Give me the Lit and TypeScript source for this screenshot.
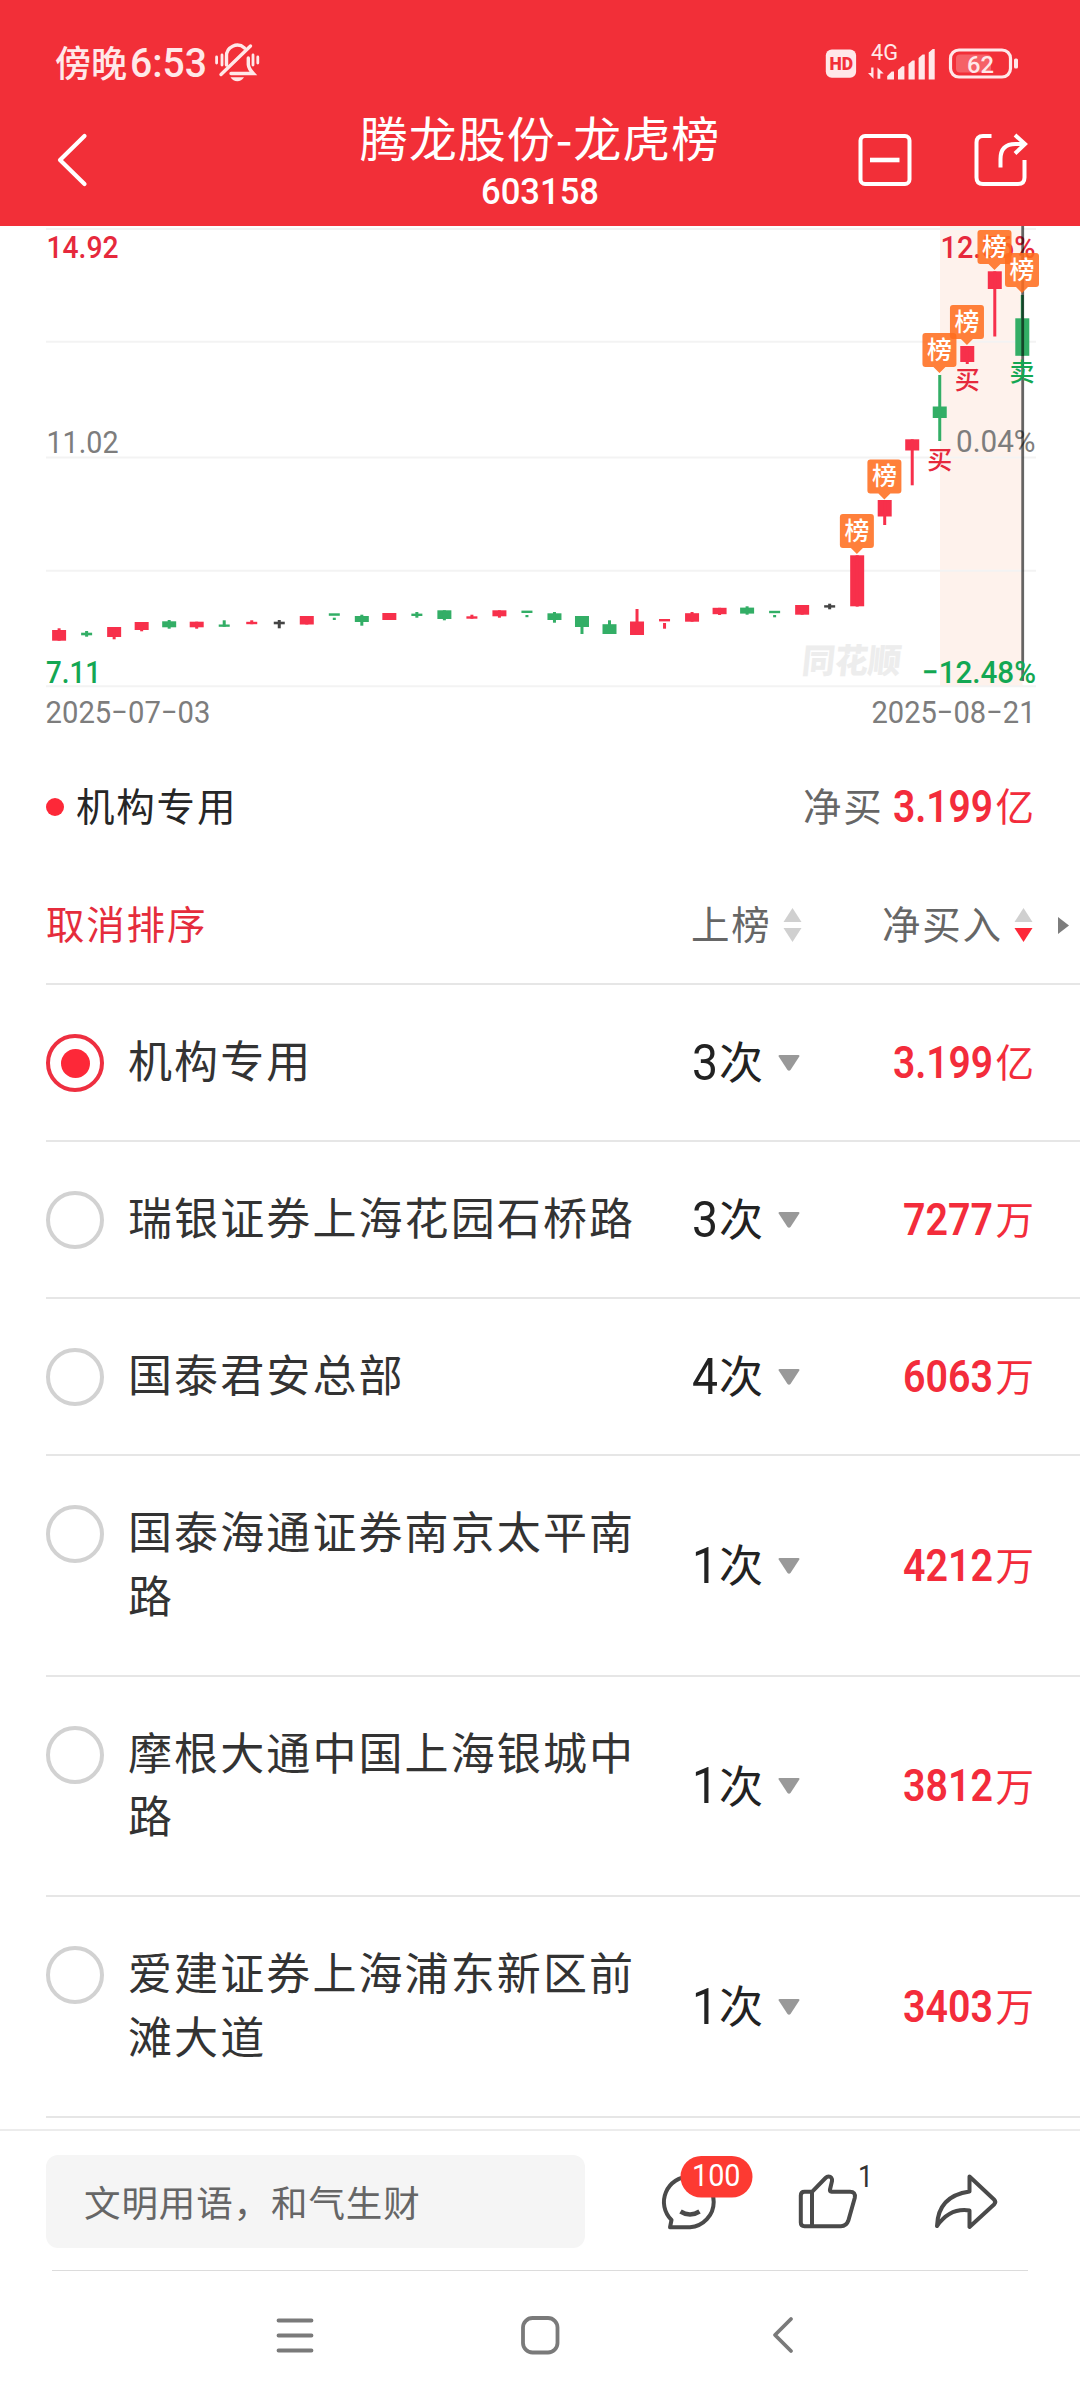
import { LitElement, html, svg, css } from "lit";
import { customElement } from "lit/decorators.js";
import { classMap } from "lit/directives/class-map.js";

type Tone = "up" | "down" | "flat";

/** One candle: body top/bottom, wick top/bottom, tone, and whether the body is a thin dash. */
type Candle = [number, number, number, number, Tone, boolean?];

interface Seat {
  name: string;
  count: string;
  amount: string;
  amountWidth: number;
  unit: string;
  checked?: boolean;
}

const CANDLES: Candle[] = [
  [630, 640.7, 628.3, 640.7, "up"],
  [632.7, 635.3, 631, 636.7, "down", true],
  [627, 637, 627, 639.3, "up"],
  [622, 630, 622, 631.3, "up"],
  [621.3, 627.3, 620, 628.7, "down"],
  [621.7, 627.3, 621.7, 628.7, "up"],
  [624.5, 626.8, 620.3, 626.8, "down", true],
  [621.8, 624.2, 620.3, 624.2, "up", true],
  [621.7, 624.3, 620, 628.3, "flat", true],
  [616, 624.5, 616, 624.5, "up"],
  [613.3, 615.8, 617.7, 620, "down", true],
  [616, 622, 614.7, 625.7, "down"],
  [613, 620, 613, 620, "up"],
  [613.6, 616, 612, 617.7, "down", true],
  [610.3, 619, 610.3, 620.3, "down"],
  [616.3, 618.7, 614.7, 618.7, "up", true],
  [610.3, 616.3, 610.3, 617.7, "up"],
  [610.6, 613, 615, 617.2, "down", true],
  [613.3, 620, 612, 622.7, "down"],
  [616, 627, 616, 634, "down"],
  [624.2, 634, 620.3, 634, "down"],
  [621.5, 635, 609, 635, "up"],
  [619, 621.4, 623, 628.7, "up", true],
  [613.2, 621.7, 612, 621.7, "up"],
  [607.8, 614.2, 607.8, 615, "up"],
  [607.6, 613.6, 606.3, 614.7, "down"],
  [610.8, 613.2, 615, 617.3, "down", true],
  [605, 614.7, 605, 614.7, "up"],
  [605.2, 607.6, 603.7, 609.3, "flat", true],
  [555.3, 606.3, 555.3, 606.6, "up"],
  [500, 516.5, 500, 525, "up"],
  [439.3, 450.5, 439.3, 485.3, "up"],
  [406.5, 418, 375, 441, "down"],
  [346, 362, 346, 364, "up"],
  [271.3, 289, 271.3, 336.5, "up"],
  [318.3, 355.8, 295, 355.8, "down"],
];

/** Candle index and the y of the marker's tip. */
const MARKERS: [number, number][] = [
  [29, 554],
  [30, 499.5],
  [32, 373],
  [33, 345],
  [34, 270],
  [35, 293],
];

const GRID = [229, 341.7, 457.5, 570.7, 686.3];

const SEATS: Seat[] = [
  { name: "机构专用", count: "3", amount: "3.199", amountWidth: 100, unit: "亿", checked: true },
  { name: "瑞银证券上海花园石桥路", count: "3", amount: "7277", amountWidth: 90, unit: "万" },
  { name: "国泰君安总部", count: "4", amount: "6063", amountWidth: 90, unit: "万" },
  { name: "国泰海通证券南京太平南路", count: "1", amount: "4212", amountWidth: 90, unit: "万" },
  { name: "摩根大通中国上海银城中路", count: "1", amount: "3812", amountWidth: 90, unit: "万" },
  { name: "爱建证券上海浦东新区前滩大道", count: "1", amount: "3403", amountWidth: 90, unit: "万" },
];

const candleX = (i: number) => 59.1 + i * 27.52;

/** Condensed figures: real text fitted to a width, sitting on the text baseline. */
const figures = (text: string, width: number, cap: number, cls = "") =>
  html`<svg class="fig ${cls}" width=${width} height=${cap}><text x="0" y=${cap} font-size=${cap / 0.711} textLength=${width} lengthAdjust="spacingAndGlyphs">${text}</text></svg>`;

@customElement("app-root")
export class AppRoot extends LitElement {
  static styles = css`
    :host {
      display: flex;
      flex-direction: column;
      width: 1080px;
      height: 2400px;
      overflow: hidden;
      background: #fff;
      color: #333;
      font-family: "Noto Sans CJK SC", "Noto Sans", sans-serif;
    }
    svg {
      display: block;
      flex: none;
      overflow: visible;
    }
    .fig {
      display: inline-block;
      font-family: Roboto, "Liberation Sans", sans-serif;
      fill: currentColor;
    }
    .strong {
      font-weight: 600;
    }
    .medium {
      font-weight: 500;
    }
    header {
      height: 226px;
      flex: none;
      background: #f22f38;
      color: #fff;
    }
    .status {
      box-sizing: border-box;
      height: 94px;
      padding: 32px 60px 0 55px;
      display: flex;
      align-items: center;
      justify-content: space-between;
      color: #ffe8e9;
      fill: #ffe8e9;
    }
    .clock {
      display: flex;
      align-items: center;
      gap: 8px;
      font-size: 36px;
      font-weight: 500;
      line-height: 48px;
      white-space: nowrap;
    }
    .clock div {
      margin-top: -5px;
    }
    .clock .fig {
      margin-left: 3px;
    }
    .title-row {
      height: 132px;
      display: grid;
      grid-template-columns: 250px 1fr 250px;
      align-items: center;
    }
    .title-row .back {
      padding-left: 55px;
    }
    .title {
      text-align: center;
      height: 100px;
    }
    .title h1 {
      margin: -1px 0 0;
      font-size: 48px;
      font-weight: 400;
      letter-spacing: 1px;
      line-height: 54px;
      white-space: nowrap;
    }
    .title .code {
      display: flex;
      justify-content: center;
      margin-top: 14px;
    }
    .tools {
      display: flex;
      gap: 60px;
      padding-left: 27px;
    }
    .chart {
      height: 510px;
      flex: none;
    }
    .chart text {
      font-family: Roboto, sans-serif;
      font-size: 31.4px;
    }
    .chart .han {
      font-family: "Noto Sans CJK SC", sans-serif;
      font-size: 25px;
      font-weight: 500;
    }
    .chart .mark {
      font-family: "Noto Sans CJK SC", sans-serif;
      font-size: 34px;
      font-weight: 900;
      fill: #ededed;
    }
    .grid {
      fill: #f3f3f3;
    }
    .up {
      fill: #f7304b;
    }
    .down {
      fill: #33ae66;
    }
    .flat {
      fill: #444;
    }
    .t-up {
      fill: #e6293c;
    }
    .t-down {
      fill: #13a753;
    }
    .t-mute {
      fill: #7d7d7d;
    }
    .legend,
    .sort {
      box-sizing: border-box;
      flex: none;
      display: flex;
      align-items: center;
      font-size: 38.5px;
      letter-spacing: 1.8px;
      white-space: nowrap;
    }
    .legend {
      height: 139px;
      padding: 0 46px 3px;
    }
    .dot {
      width: 18px;
      height: 18px;
      border-radius: 50%;
      background: #fd2838;
      margin: 5px 12px 0 0;
    }
    .legend .label {
      flex: 1;
      color: #262626;
    }
    .legend .muted {
      margin-right: 10px;
    }
    .muted {
      color: #666;
    }
    .amount {
      color: #f32c3b;
      letter-spacing: 0;
      font-size: 38.5px;
      white-space: nowrap;
      text-align: right;
    }
    .amount .fig {
      margin-right: 2px;
    }
    .sort {
      height: 108px;
      padding: 0 11px 14px 46px;
      color: #666;
    }
    .sort .cancel {
      color: #e52c3c;
      width: 645px;
    }
    .sort .by-count {
      width: 191px;
    }
    .sort .by-net {
      width: 176px;
    }
    .sort .col {
      display: flex;
      align-items: center;
    }
    .sort svg {
      margin-top: 6px;
    }
    .sort .col svg {
      margin-left: 11px;
    }
    .list {
      flex: none;
      margin-left: 46px;
      border-top: 2px solid #e6e6e6;
    }
    .row {
      display: grid;
      grid-template-columns: 82px 563px 170px 1fr;
      padding: 46px 46px 45.5px 0;
      border-bottom: 2px solid #e6e6e6;
      align-items: center;
    }
    .radio {
      box-sizing: border-box;
      width: 58px;
      height: 58px;
      border: 4px solid #d2d2d2;
      border-radius: 50%;
      align-self: start;
      margin-top: 3px;
      display: grid;
      place-items: center;
    }
    .radio.on {
      border-color: #ee2f40;
    }
    .radio.on::after {
      content: "";
      width: 29px;
      height: 29px;
      border-radius: 50%;
      background: #fd2838;
    }
    .name {
      width: 512px;
      font-size: 44px;
      letter-spacing: 2.1px;
      line-height: 63.5px;
      margin-top: -3px;
      margin-bottom: 3px;
      word-break: break-all;
    }
    .count {
      display: flex;
      align-items: center;
      color: #222;
      font-size: 44px;
      line-height: 60px;
      padding-left: 1px;
    }
    .count .fig {
      margin-right: 1px;
    }
    .count svg.tri {
      margin-left: 15px;
    }
    .count span {
      margin-top: -5px;
      white-space: nowrap;
    }
    .row .amount {
      line-height: 60px;
      margin-top: -5px;
    }
    .bar {
      margin-top: auto;
      height: 141px;
      flex: none;
      box-sizing: border-box;
      border-top: 2px solid #ececec;
      background: #fff;
      padding: 24px 46px 0;
      display: flex;
      align-items: flex-start;
    }
    .input {
      width: 539px;
      height: 93px;
      box-sizing: border-box;
      padding-left: 38px;
      border-radius: 12px;
      background: #f5f5f5;
      color: #666;
      font-size: 36.5px;
      letter-spacing: 0.9px;
      line-height: 93px;
      white-space: nowrap;
    }
    .nav {
      flex: none;
      height: 130px;
      box-sizing: border-box;
      margin: 0 52px;
      border-top: 1px solid #dcdcdc;
      padding: 45px 235px 0 224px;
      display: flex;
      justify-content: space-between;
      align-items: flex-start;
    }
    .nav .home {
      margin-right: 8px;
    }
    .actions {
      fill: none;
      stroke: #4a4a4a;
      stroke-width: 4;
      stroke-linejoin: round;
      stroke-linecap: round;
    }
    .actions text {
      font-family: Roboto, sans-serif;
      stroke: none;
    }
    .line {
      fill: none;
      stroke: #7a7a7a;
      stroke-width: 3.8;
      stroke-linecap: round;
      stroke-linejoin: round;
    }
    .white {
      fill: none;
      stroke: #fff;
      stroke-width: 4;
    }
  `;

  private renderStatus() {
    return html`
      <div class="status">
        <div class="clock">
          <div>傍晚${figures("6:53", 77, 29, "medium")}</div>
          <svg width="45" height="38" viewBox="216 45.500 45 38" fill="none" stroke="#ffe8e9" stroke-width="3.4" stroke-linecap="round">
            <path d="M217.6 58.500v6M223 56.500v10M254 56.500v10M258.800 58.500v6" stroke-width="2.800" />
            <path d="M227.500 66.500V58a10.800 10.800 0 0 1 18-8.500" />
            <path d="M249.300 59.500v6.500q.3 4 5 9H232" />
            <path d="M222 76 251.500 47.500" />
            <path d="M231.500 78.800h13.500q-2.500 4-6.700 4t-6.800-4z" fill="#ffe8e9" stroke="none" />
          </svg>
        </div>
        <svg width="196" height="38" viewBox="824 43.500 196 38">
          <rect x="825.800" y="49" width="30.300" height="28.300" rx="6" />
          <text x="829.500" y="69" font-family="Roboto, sans-serif" font-weight="900" font-size="17.500" fill="#f22f38" textLength="23.500">HD</text>
          <text x="871" y="59.300" font-family="Roboto, sans-serif" font-size="21.500" textLength="27" lengthAdjust="spacingAndGlyphs">4G</text>
          <path d="M873.500 67v11.300L868 72.500h3.200V67zM877.500 78.300V67l6.200 6h-3.400v5.300z" />
          <path d="M887.200 79v-3.500l4.500-4.500h2.300v8zM898 79V69.500l4.200-3.800h2.200V79zM908.500 79V63.500l4-3.500h2.200v19zM918.600 79V57.500l4-3.500h2.200v25zM928.700 79V52l4-3.500h2V79z" />
          <rect x="950.500" y="49.500" width="60" height="27" rx="8.500" fill="none" stroke="#ffe8e9" stroke-width="3.200" />
          <rect x="956" y="54" width="35" height="18" rx="4" opacity=".27" />
          <rect x="1014" y="58" width="4" height="10" rx="1.500" />
          <text x="967" y="72" font-family="Roboto, sans-serif" font-weight="500" font-size="24.500" textLength="27" lengthAdjust="spacingAndGlyphs">62</text>
        </svg>
      </div>
    `;
  }

  private renderTitle() {
    return html`
      <div class="title-row">
        <div class="back">
          <svg class="white" width="34" height="54" viewBox="55 133 34 54"><path d="M84.500 136 60 160l24.500 24" stroke-width="4.200" stroke-linecap="round" stroke-linejoin="round" /></svg>
        </div>
        <div class="title">
          <h1>腾龙股份-龙虎榜</h1>
          <div class="code">${figures("603158", 118, 26.7, "medium")}</div>
        </div>
        <div class="tools">
          <svg class="white" width="56" height="54" viewBox="857 132.500 56 54">
            <rect x="860.500" y="135.500" width="49" height="48" rx="4.500" />
            <path d="M870 159.500h29.500" stroke-width="4.600" />
          </svg>
          <svg class="white" width="56" height="54" viewBox="973 132.500 56 54">
            <path d="M991.500 135.500H983q-6.500 0-6.500 6.500v35q0 6.500 6.500 6.500h35q6.500 0 6.500-6.500v-17.500" />
            <path d="M1000.500 167v-8.500q0-15 15-15H1025" />
            <path d="M1015 134.500l10 9-10 9.500" />
          </svg>
        </div>
      </div>
    `;
  }

  private renderChart() {
    return html`
      <svg class="chart" width="1080" height="510" viewBox="0 226 1080 510">
        <rect x="940" y="226" width="82.500" height="460" fill="#fef2ec" />
        ${GRID.map((y) => svg`<rect class="grid" x="46" y=${y - 1} width="990" height="2" />`)}
        <text class="mark" transform="translate(801 672.500) skewX(-6)" textLength="99" lengthAdjust="spacingAndGlyphs">同花顺</text>
        ${CANDLES.map(([top, bottom, wickTop, wickBottom, tone, thin], i) => {
          const x = candleX(i);
          const w = thin ? 11 : 14;
          return svg`<g class=${tone}>
            <rect x=${x - w / 2} y=${top} width=${w} height=${bottom - top} />
            <rect x=${x - 1.5} y=${wickTop} width="3" height=${wickBottom - wickTop} />
          </g>`;
        })}
        <text class="t-up" x="46.500" y="257.700" textLength="72" lengthAdjust="spacingAndGlyphs" font-weight="500">14.92</text>
        <text class="t-mute" x="46.500" y="453.300" textLength="72" lengthAdjust="spacingAndGlyphs">11.02</text>
        <text class="t-down" x="46" y="682.700" textLength="55" lengthAdjust="spacingAndGlyphs" font-weight="500">7.11</text>
        <text class="t-up" x="940.500" y="257.700" textLength="95" lengthAdjust="spacingAndGlyphs" font-weight="500">12.56%</text>
        <text class="t-mute" x="956" y="451.500" textLength="79.500" lengthAdjust="spacingAndGlyphs">0.04%</text>
        <rect x="1021.300" y="226" width="2.800" height="455" fill="#000" opacity=".6" />
        <text class="t-down" x="922" y="682.600" textLength="114" lengthAdjust="spacingAndGlyphs" font-weight="500">−12.48%</text>
        <text class="t-mute" x="45.500" y="722.500" textLength="165" lengthAdjust="spacingAndGlyphs">2025−07−03</text>
        <text class="t-mute" x="871.500" y="722.500" textLength="164" lengthAdjust="spacingAndGlyphs">2025−08−21</text>
        <text class="han t-up" x="927.300" y="468.500">买</text>
        <text class="han t-up" x="954.800" y="389">买</text>
        <text class="han t-down" x="1009.600" y="381">卖</text>
        ${MARKERS.map(([i, tip]) => {
          const x = candleX(i) - 0.3;
          return svg`<g>
            <path d=${`M${x - 14} ${tip - 40}h28q3 0 3 3v28q0 3-3 3h-8l-6 6l-6-6h-8q-3 0-3-3v-28q0-3 3-3z`} fill="#ff6d1e" fill-opacity=".87" />
            <text class="han" x=${x - 12.5} y=${tip - 14.3} fill="#fff">榜</text>
          </g>`;
        })}
      </svg>
    `;
  }

  private renderSortIcon(active: boolean) {
    return html`
      <svg width="19" height="34" viewBox="0 0 19 34">
        <path d="M9.500 0 18.500 14h-18z" fill="#d0d0d0" />
        <path d="M9.500 34 .5 20h18z" fill=${active ? "#fd2838" : "#d0d0d0"} />
      </svg>
    `;
  }

  private renderSeat(seat: Seat) {
    return html`
      <div class="row">
        <div class=${classMap({ radio: true, on: !!seat.checked })}></div>
        <div class="name">${seat.name}</div>
        <div class="count">
          <span>${figures(seat.count, 26, 35.5)}次</span>
          <svg class="tri" width="22" height="16" viewBox="0 0 22 16"><path d="M1.500 0h19q1.500 0 .8 1.500L12.500 15q-1.500 1.500-3 0L.700 1.500Q0 0 1.500 0z" fill="#999" /></svg>
        </div>
        <div class="amount">${figures(seat.amount, seat.amountWidth, 31.5, "strong")}${seat.unit}</div>
      </div>
    `;
  }

  private renderBar() {
    return html`
      <div class="bar">
        <div class="input">文明用语，和气生财</div>
        <svg class="actions" width="449" height="93" viewBox="585 2155 449 93">
          <path d="M690 2176.500a26 25.500 0 0 0-18.500 43.500l-1.500 7.300h20a26 25.500 0 0 0 0-50.800" />
          <path d="M680.500 2211.500q9.500 6 19 0" stroke-width="4.500" stroke-linecap="butt" />
          <rect x="680.500" y="2156" width="72" height="41.500" rx="20.700" fill="#fd3a32" stroke="none" />
          <text x="692" y="2186.300" font-size="31.500" textLength="48.500" lengthAdjust="spacingAndGlyphs" fill="#fff">100</text>
          <path d="M812 2191.800h-7.500q-3.700 0-3.700 3.700v27q0 3.700 3.700 3.700H841q5.500 0 7.300-5.500l6.500-23q1-5.900-4.800-5.900h-18.500q-2 0-1.500-2.300l2-8.500q.3-4.500-3.500-4.500-1.500 0-3 1.500zv34.400" />
          <text x="858" y="2187" font-size="31" textLength="15" lengthAdjust="spacingAndGlyphs" fill="#333">1</text>
          <path d="M969.500 2176.500 994 2199.500q2.500 2.500 0 5l-24.500 22.500V2210.500Q950 2207.500 937 2226q1-30 32.500-34.500z" />
        </svg>
      </div>
    `;
  }

  render() {
    return html`
      <header>${this.renderStatus()}${this.renderTitle()}</header>
      ${this.renderChart()}
      <div class="legend">
        <span class="dot"></span>
        <span class="label">机构专用</span>
        <span class="muted">净买</span>
        <span class="amount">${figures("3.199", 100, 31.5, "strong")}亿</span>
      </div>
      <div class="sort">
        <span class="cancel">取消排序</span>
        <span class="col by-count">上榜${this.renderSortIcon(false)}</span>
        <span class="col by-net">净买入${this.renderSortIcon(true)}</span>
        <svg width="11" height="17" viewBox="0 0 11 17"><path d="M0 0 11 8.500 0 17z" fill="#7d7d7d" /></svg>
      </div>
      <div class="list">${SEATS.map((seat) => this.renderSeat(seat))}</div>
      ${this.renderBar()}
      <nav class="nav">
        <svg class="line" width="38" height="38" viewBox="0 0 38 38"><path d="M2.500 4.500h33M2.500 19.500h33M2.500 34.500h33" /></svg>
        <svg class="line home" width="38" height="38" viewBox="0 0 38 38"><rect x="2" y="2" width="34.500" height="34.500" rx="9.500" /></svg>
        <svg class="line" width="20" height="38" viewBox="0 0 20 38"><path d="M18 3 2 19l16 16" /></svg>
      </nav>
    `;
  }
}
